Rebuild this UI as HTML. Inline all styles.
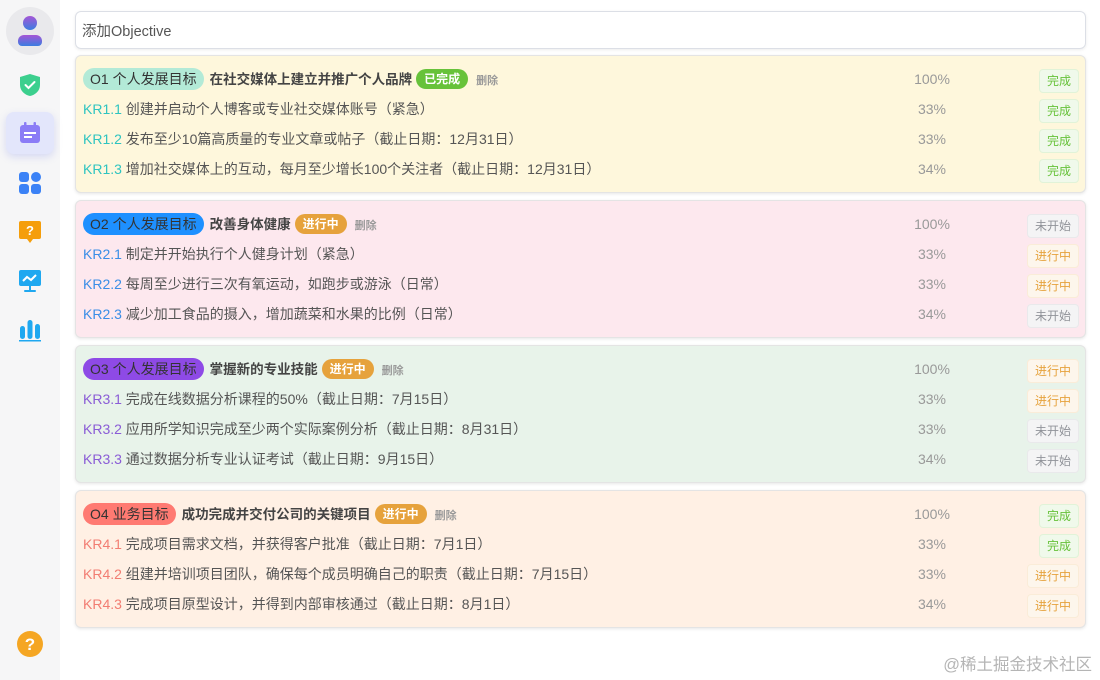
<!DOCTYPE html>
<html><head><meta charset="utf-8"><style>
*{margin:0;padding:0;box-sizing:border-box}
body{width:1100px;height:680px;background:#fff;font-family:"Liberation Sans","Noto Sans CJK SC",sans-serif;position:relative;overflow:hidden;color:#555}
.side{position:absolute;left:0;top:0;width:60px;height:680px;background:#f6f6f7}
.ic{position:absolute;left:30px;transform:translate(-50%,-50%)}
.inp{position:absolute;left:75px;top:11px;width:1011px;height:38px;border:1px solid #dcdfe6;border-radius:6px;font-size:14.5px;color:#555;padding:8px 6px;box-shadow:0 1px 3px rgba(0,0,0,.08)}
.card{position:absolute;left:75px;width:1011px;height:138px;border-radius:6px;border:1px solid #e4e4e4;box-shadow:0 1px 3px rgba(0,0,0,.1)}
.row{position:absolute;left:7px;height:22px;line-height:22px;font-size:14px;color:#555;white-space:nowrap}
.pill{display:inline-block;height:22px;line-height:22px;padding:0 7px;border-radius:11px;font-size:14px;color:#333;vertical-align:top}
.t{font-weight:bold;color:#444;margin-left:6px;font-size:13.5px}
.st{display:inline-block;height:20px;line-height:20px;padding:0 8px;border-radius:10px;color:#fff;font-weight:bold;font-size:12px;margin-left:4px;vertical-align:top;margin-top:1px}
.del{font-size:11px;color:#999;font-weight:bold;margin-left:8px}
.kr{font-size:14px}
.pct{position:absolute;left:826px;width:60px;text-align:center;font-size:14px;color:#999;height:22px;line-height:22px}
.tag{position:absolute;right:6px;height:24px;line-height:22px;padding:0 7px;font-size:12px;border-radius:4px;border:1px solid}
.g{color:#67c23a;background:#f0f9eb;border-color:#e1f3d8}
.o{color:#e6a23c;background:#fdf6ec;border-color:#faecd8}
.n{color:#909399;background:#f4f4f5;border-color:#e9e9eb}
.wm{position:absolute;right:8px;top:651px;font-size:16.5px;color:#b5b5b5}
</style></head><body>
<div class="side">
<div class="ic" style="top:31px;width:48px;height:48px;border-radius:50%;background:#e9e9ec"></div>
<svg class="ic" style="top:31px" width="26" height="32" viewBox="0 0 26 32"><defs><linearGradient id="a" x1="0" y1="0" x2="0" y2="1"><stop offset="0" stop-color="#a556d6"/><stop offset="1" stop-color="#3b7de0"/></linearGradient></defs><circle cx="13" cy="8" r="7" fill="url(#a)"/><path d="M1 26a6 6 0 0 1 6-6h12a6 6 0 0 1 6 6v1a4 4 0 0 1-4 4H5a4 4 0 0 1-4-4z" fill="url(#a)"/></svg>
<svg class="ic" style="top:85px" width="22" height="24" viewBox="0 0 22 24"><path d="M11 1L21 4v8c0 6-5 10-10 11C6 22 1 18 1 12V4z" fill="#3ccf8e"/><path d="M6.5 12l3 3 6-6" stroke="#fff" stroke-width="2" fill="none" stroke-linecap="round"/></svg>
<div class="ic" style="top:133px;width:48px;height:42px;border-radius:8px;background:#e3e6fb;box-shadow:0 3px 8px rgba(120,130,230,.25)"></div>
<svg class="ic" style="top:133px" width="22" height="22" viewBox="0 0 22 22"><rect x="1" y="3" width="20" height="18" rx="3" fill="#8b7cf6"/><rect x="5" y="0" width="2.5" height="6" rx="1" fill="#8b7cf6"/><rect x="14.5" y="0" width="2.5" height="6" rx="1" fill="#8b7cf6"/><rect x="5" y="10" width="12" height="2" fill="#fff"/><rect x="5" y="14" width="8" height="2" fill="#fff"/></svg>
<svg class="ic" style="top:183px" width="22" height="22" viewBox="0 0 22 22"><rect x="0" y="0" width="10" height="10" rx="3" fill="#3b82f6"/><circle cx="17" cy="5" r="5" fill="#3b82f6"/><rect x="0" y="12" width="10" height="10" rx="3" fill="#3b82f6"/><rect x="12" y="12" width="10" height="10" rx="3" fill="#3b82f6"/></svg>
<svg class="ic" style="top:232px" width="24" height="24" viewBox="0 0 24 24"><path d="M3 1h18a2 2 0 0 1 2 2v14a2 2 0 0 1-2 2h-6l-3 4-3-4H3a2 2 0 0 1-2-2V3a2 2 0 0 1 2-2z" fill="#f59e0b"/><text x="12" y="15" font-size="13" font-weight="bold" fill="#fff" text-anchor="middle" font-family="Liberation Sans">?</text></svg>
<svg class="ic" style="top:281px" width="24" height="24" viewBox="0 0 24 24"><rect x="1" y="1" width="22" height="16" rx="2" fill="#1fa8f0"/><path d="M5 12l4-4 4 3 5-5" stroke="#fff" stroke-width="2" fill="none"/><rect x="11" y="17" width="2" height="4" fill="#1fa8f0"/><rect x="6" y="21" width="12" height="2" rx="1" fill="#1fa8f0"/></svg>
<svg class="ic" style="top:330px" width="24" height="24" viewBox="0 0 24 24"><rect x="2" y="8" width="5" height="13" rx="2.5" fill="#1fa8f0"/><rect x="9.5" y="2" width="5" height="19" rx="2.5" fill="#1fa8f0"/><rect x="17" y="6" width="5" height="15" rx="2.5" fill="#1fa8f0"/><rect x="1" y="22" width="22" height="1.5" fill="#1fa8f0"/></svg>
<svg class="ic" style="top:644px" width="26" height="26" viewBox="0 0 26 26"><circle cx="13" cy="13" r="13" fill="#f5a623"/><text x="13" y="19" font-size="17" font-weight="bold" fill="#fff" text-anchor="middle" font-family="Liberation Sans">?</text></svg>
</div>
<div class="inp">添加Objective</div>

<div class="card" style="top:55px;background:#fef7dc">
<div class="row" style="top:12px"><span class="pill" style="background:#b3ead7">O1 个人发展目标</span><span class="t">在社交媒体上建立并推广个人品牌</span><span class="st" style="background:#67c23a">已完成</span><span class="del">删除</span></div>
<div class="pct" style="top:12px">100%</div><div class="tag g" style="top:13px">完成</div>
<div class="row" style="top:42px"><span class="kr" style="color:#2ec4c0">KR1.1</span> 创建并启动个人博客或专业社交媒体账号（紧急）</div>
<div class="pct" style="top:42px">33%</div><div class="tag g" style="top:43px">完成</div>
<div class="row" style="top:72px"><span class="kr" style="color:#2ec4c0">KR1.2</span> 发布至少10篇高质量的专业文章或帖子（截止日期：12月31日）</div>
<div class="pct" style="top:72px">33%</div><div class="tag g" style="top:73px">完成</div>
<div class="row" style="top:102px"><span class="kr" style="color:#2ec4c0">KR1.3</span> 增加社交媒体上的互动，每月至少增长100个关注者（截止日期：12月31日）</div>
<div class="pct" style="top:102px">34%</div><div class="tag g" style="top:103px">完成</div>
</div>

<div class="card" style="top:200px;background:#fde8ee">
<div class="row" style="top:12px"><span class="pill" style="background:#1e90ff">O2 个人发展目标</span><span class="t">改善身体健康</span><span class="st" style="background:#e6a23c">进行中</span><span class="del">删除</span></div>
<div class="pct" style="top:12px">100%</div><div class="tag n" style="top:13px">未开始</div>
<div class="row" style="top:42px"><span class="kr" style="color:#3a8ee6">KR2.1</span> 制定并开始执行个人健身计划（紧急）</div>
<div class="pct" style="top:42px">33%</div><div class="tag o" style="top:43px">进行中</div>
<div class="row" style="top:72px"><span class="kr" style="color:#3a8ee6">KR2.2</span> 每周至少进行三次有氧运动，如跑步或游泳（日常）</div>
<div class="pct" style="top:72px">33%</div><div class="tag o" style="top:73px">进行中</div>
<div class="row" style="top:102px"><span class="kr" style="color:#3a8ee6">KR2.3</span> 减少加工食品的摄入，增加蔬菜和水果的比例（日常）</div>
<div class="pct" style="top:102px">34%</div><div class="tag n" style="top:103px">未开始</div>
</div>

<div class="card" style="top:345px;background:#e8f3ea">
<div class="row" style="top:12px"><span class="pill" style="background:#8e4ae6">O3 个人发展目标</span><span class="t">掌握新的专业技能</span><span class="st" style="background:#e6a23c">进行中</span><span class="del">删除</span></div>
<div class="pct" style="top:12px">100%</div><div class="tag o" style="top:13px">进行中</div>
<div class="row" style="top:42px"><span class="kr" style="color:#8a5cd6">KR3.1</span> 完成在线数据分析课程的50%（截止日期：7月15日）</div>
<div class="pct" style="top:42px">33%</div><div class="tag o" style="top:43px">进行中</div>
<div class="row" style="top:72px"><span class="kr" style="color:#8a5cd6">KR3.2</span> 应用所学知识完成至少两个实际案例分析（截止日期：8月31日）</div>
<div class="pct" style="top:72px">33%</div><div class="tag n" style="top:73px">未开始</div>
<div class="row" style="top:102px"><span class="kr" style="color:#8a5cd6">KR3.3</span> 通过数据分析专业认证考试（截止日期：9月15日）</div>
<div class="pct" style="top:102px">34%</div><div class="tag n" style="top:103px">未开始</div>
</div>

<div class="card" style="top:490px;background:#fff0e4">
<div class="row" style="top:12px"><span class="pill" style="background:#ff7a72">O4 业务目标</span><span class="t">成功完成并交付公司的关键项目</span><span class="st" style="background:#e6a23c">进行中</span><span class="del">删除</span></div>
<div class="pct" style="top:12px">100%</div><div class="tag g" style="top:13px">完成</div>
<div class="row" style="top:42px"><span class="kr" style="color:#f27d72">KR4.1</span> 完成项目需求文档，并获得客户批准（截止日期：7月1日）</div>
<div class="pct" style="top:42px">33%</div><div class="tag g" style="top:43px">完成</div>
<div class="row" style="top:72px"><span class="kr" style="color:#f27d72">KR4.2</span> 组建并培训项目团队，确保每个成员明确自己的职责（截止日期：7月15日）</div>
<div class="pct" style="top:72px">33%</div><div class="tag o" style="top:73px">进行中</div>
<div class="row" style="top:102px"><span class="kr" style="color:#f27d72">KR4.3</span> 完成项目原型设计，并得到内部审核通过（截止日期：8月1日）</div>
<div class="pct" style="top:102px">34%</div><div class="tag o" style="top:103px">进行中</div>
</div>
<div class="wm">@稀土掘金技术社区</div>
</body></html>
